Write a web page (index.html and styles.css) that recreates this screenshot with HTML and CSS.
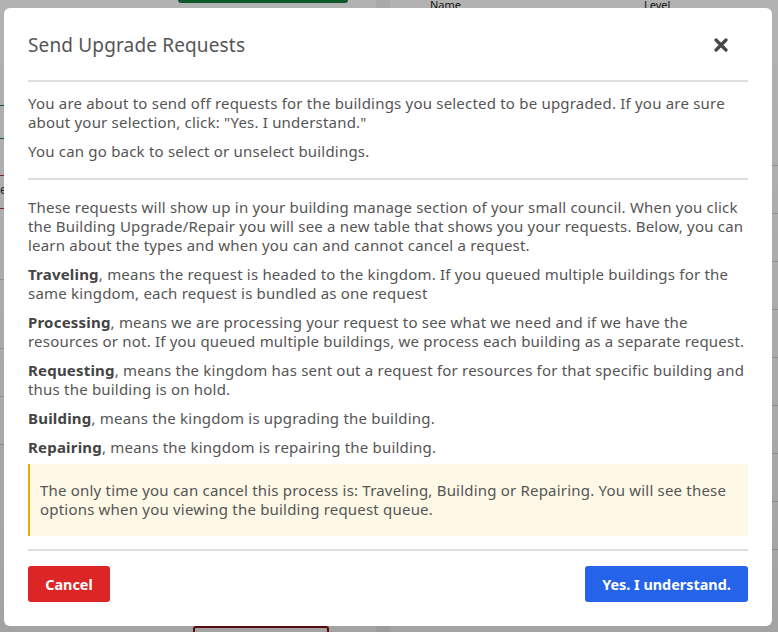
FILE: index.html
```html
<!DOCTYPE html>
<html lang="en">
<head>
<meta charset="utf-8">
<title>Send Upgrade Requests</title>
<link rel="stylesheet" href="styles.css">
</head>
<body>
<div class="page">
  <div class="left-col">
    <div class="green-btn"></div>
    <div class="row row-a"></div>
    <div class="row row-green"></div>
    <div class="row row-red"><span class="cut">e</span></div>
    <div class="row row-b"></div>
    <div class="row row-c"></div>
    <div class="row row-d"></div>
    <div class="row row-d"></div>
    <div class="red-box"></div>
  </div>
  <div class="scroll-col"></div>
  <div class="right-col">
    <div class="thead"><span class="th-name">Name</span><span class="th-level">Level</span></div>
    <div class="trow"></div>
    <div class="trow"></div>
    <div class="trow"></div>
    <div class="trow"></div>
    <div class="trow"></div>
    <div class="trow"></div>
    <div class="trow"></div>
    <div class="trow"></div>
    <div class="trow"></div>
  </div>
</div>

<div class="overlay">
  <div class="modal">
    <div class="modal-header">
      <h2 class="modal-title">Send Upgrade Requests</h2>
      <button class="close-btn" aria-label="Close">
        <svg width="14" height="14" viewBox="0 0 14 14"><path d="M2 2 L12 12 M12 2 L2 12" stroke="#474747" stroke-width="3.2" stroke-linecap="round"/></svg>
      </button>
    </div>
    <hr class="divider first">
    <div class="modal-body">
      <p>You are about to send off requests for the buildings you selected to be upgraded. If you are sure<br>about your selection, click: "Yes. I understand."</p>
      <p>You can go back to select or unselect buildings.</p>
      <hr class="divider mid">
      <p>These requests will show up in your building manage section of your small council. When you click<br>the Building Upgrade/Repair you will see a new table that shows you your requests. Below, you can<br>learn about the types and when you can and cannot cancel a request.</p>
      <p><strong>Traveling</strong>, means the request is headed to the kingdom. If you queued multiple buildings for the<br>same kingdom, each request is bundled as one request</p>
      <p><strong>Processing</strong>, means we are processing your request to see what we need and if we have the<br>resources or not. If you queued multiple buildings, we process each building as a separate request.</p>
      <p><strong>Requesting</strong>, means the kingdom has sent out a request for resources for that specific building and<br>thus the building is on hold.</p>
      <p><strong>Building</strong>, means the kingdom is upgrading the building.</p>
      <p class="last-p"><strong>Repairing</strong>, means the kingdom is repairing the building.</p>
      <div class="alert">The only time you can cancel this process is: Traveling, Building or Repairing. You will see these<br>options when you viewing the building request queue.</div>
    </div>
    <hr class="divider last">
    <div class="modal-footer">
      <button class="btn btn-cancel">Cancel</button>
      <button class="btn btn-ok">Yes. I understand.</button>
    </div>
  </div>
</div>
</body>
</html>
```
FILE: styles.css
```css
* { box-sizing: border-box; }
html, body { margin: 0; padding: 0; }
body {
  width: 778px;
  height: 632px;
  overflow: hidden;
  font-family: "Noto Sans", "Open Sans", sans-serif;
  background: #fff;
}

/* background page */
.page {
  display: grid;
  grid-template-columns: 376px 14px 1fr;
  height: 632px;
}
.left-col {
  background: #fff;
  display: flex;
  flex-direction: column;
}
.green-btn {
  margin-left: 178px;
  width: 170px;
  height: 3px;
  background: #15803d;
  border-radius: 0 0 3px 3px;
  margin-bottom: 102px;
}
.row { border-bottom: 1px solid #d8d8d8; }
.row-a { height: 0; border-bottom: 1px solid #15803d; margin-bottom: 32px; }
.row-green { height: 0; border-bottom: 1px solid #15803d; margin-bottom: 36px; }
.row-red {
  height: 34px;
  border-top: 1px solid #c53030;
  border-bottom: 1px solid #c53030;
  font-size: 12px;
  line-height: 20px;
  padding-top: 4px;
}
.cut { color: #333; }
.row-b { height: 71px; }
.row-c { height: 69px; }
.row-d { height: 48px; }
.red-box {
  margin-top: auto;
  margin-left: 193px;
  width: 136px;
  height: 6px;
  border: 2px solid #8b1010;
  border-bottom: none;
  border-radius: 3px 3px 0 0;
}
.scroll-col { background: #f3f3f3; }
.right-col {
  background: #fff;
  display: flex;
  flex-direction: column;
}
.thead {
  height: 165px;
  display: flex;
  font-size: 11px;
  line-height: 10px;
  color: #222;
  padding-left: 40px;
}
.th-name { width: 214px; }
.trow { height: 48px; border-top: 1px solid #d6d6d6; }

/* overlay + modal */
.overlay {
  position: fixed;
  inset: 0;
  background: linear-gradient(rgba(0,0,0,0.30), rgba(0,0,0,0.36));
  padding: 8px 6px 0 4px;
}
.modal {
  background: #fff;
  border-radius: 6px;
  padding: 24px;
  color: #555;
  height: 618px;
  display: flex;
  flex-direction: column;
}
.modal-header {
  display: flex;
  align-items: center;
  justify-content: space-between;
  height: 26px;
}
.modal-title {
  margin: 0;
  font-weight: 400;
  font-size: 19px;
  letter-spacing: 0.15px;
  line-height: 26px;
  color: #555;
}
.close-btn {
  border: 0;
  background: none;
  padding: 0;
  margin-right: 20px;
  width: 14px;
  height: 14px;
  display: flex;
}
.divider {
  border: 0;
  height: 2px;
  background: #dedede;
  margin: 0;
}
.divider.first { margin-top: 22px; margin-bottom: 12px; }
.divider.mid { margin-top: 17px; margin-bottom: 18px; }
.divider.last { margin-top: 13px; margin-bottom: 15px; }

.modal-body p,
.alert {
  font-size: 15px;
  letter-spacing: 0.2px;
  line-height: 19.2px;
  white-space: nowrap;
  color: #555;
}
.modal-body p { margin: 0 0 9.6px; }
.modal-body p.last-p { margin-bottom: 7px; }
.modal-body strong { color: #444; font-weight: 700; }
.alert {
  margin-top: 0;
  background: #fdf9e6;
  border-left: 2px solid #e3ad12;
  padding: 17px 10px 17px 10px;
}

.modal-footer {
  display: flex;
  justify-content: space-between;
}
.btn {
  height: 36px;
  border: 0;
  border-radius: 3px;
  color: #fff;
  font-family: inherit;
  font-weight: 700;
  font-size: 14.4px;
  padding: 0;
  white-space: nowrap;
}
.btn-cancel { background: #dc2626; width: 82px; }
.btn-ok { background: #2563eb; width: 163px; }
```
